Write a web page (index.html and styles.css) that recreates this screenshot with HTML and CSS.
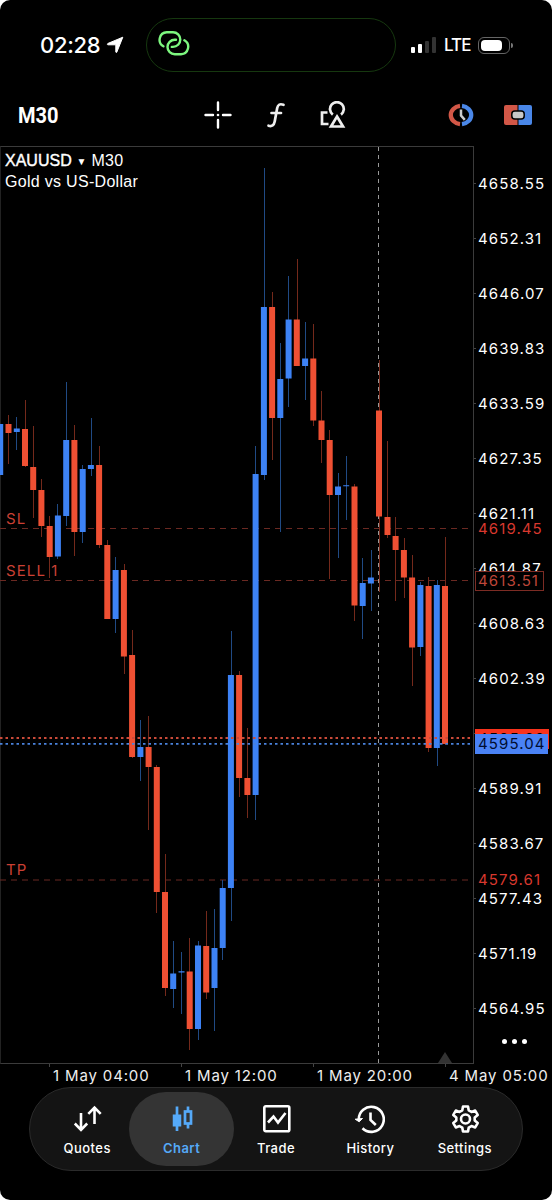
FILE: index.html
```
<!DOCTYPE html>
<html lang="en">
<head>
    <meta charset="UTF-8">
    <title>XAUUSD M30</title>
    <link rel="stylesheet" href="styles.css">
</head>
<body>
<div class="phone">
    <header class="status-bar">
        <div class="clock">
            <span>02:28</span>
            <svg width="18" height="18" viewBox="0 0 18 18"><path d="M16.800 1.200 10.800 16.200Q10.200 17 9.800 16V8.800H1.800Q.8 8.200 1.800 7.500Z" fill="#fff" stroke="#fff" stroke-linejoin="round"/></svg>
        </div>
        <div class="island">
            <svg width="32" height="26" viewBox="0 0 32 26" fill="none" stroke="#7df77f" stroke-width="2.400" stroke-linecap="round">
                <path d="M5.400 15.300A7.500 7.500 0 0 1 8.800 1.300H15A7.300 7.300 0 0 1 15 15.900H13.800"/>
                <path d="M26.400 9.300A7.500 7.500 0 0 1 23 23.300H16.800A7.300 7.300 0 0 1 16.800 8.700H18"/>
            </svg>
        </div>
        <div class="signal">
            <i class="bar b1"></i><i class="bar b2"></i><i class="bar b3 off"></i><i class="bar b4 off"></i>
        </div>
        <span class="network">LTE</span>
        <div class="battery"><i></i></div>
    </header>

    <nav class="toolbar">
        <span class="timeframe"><b>M30</b></span>
        <svg class="tool-cross" width="28" height="28" viewBox="0 0 28 28" stroke="#fff" stroke-width="2.400" stroke-linecap="round">
            <path d="M14 1.500V9M14 19V26.500M1.500 14H9M19 14H26.500"/>
            <path d="M14 14h.01" stroke-width="2.600"/>
        </svg>
        <svg class="tool-func" width="20" height="28" viewBox="0 0 20 28" fill="none" stroke="#eee" stroke-width="2.700" stroke-linecap="round">
            <path d="M17.500 3.800Q12.300 1.800 11.200 7L8.700 20.500Q7.600 26.300 2.500 24.700M5.500 12H15"/>
        </svg>
        <svg class="tool-shapes" width="28" height="28" viewBox="0 0 28 28" fill="none" stroke="#eee" stroke-width="2.700">
            <path d="M13.800 13.600A6.900 6.900 0 1 1 22 13.600"/>
            <path d="M8.500 11.500H3V23H9.500"/>
            <path d="M18 15.500 24 25.500H12Z"/>
        </svg>
        <svg class="tool-clock" width="28" height="24" viewBox="0 0 28 24" fill="none">
            <path d="M13 2.800A10.800 9.300 0 0 0 13 21.200" stroke="#d25747" stroke-width="4.300"/>
            <path d="M15 2.800A10.800 9.300 0 0 1 15 21.200" stroke="#4a87e8" stroke-width="4.300"/>
            <path d="M14 6.500V12.500L17.800 16.800" stroke="#ccc" stroke-width="2.500"/>
        </svg>
        <svg class="tool-trade" width="28" height="20" viewBox="0 0 28 20">
            <path d="M2 0H13.500V20H2Q0 20 0 18V2Q0 0 2 0Z" fill="#d25747"/>
            <path d="M14.500 0H26Q28 0 28 2V18Q28 20 26 20H14.500Z" fill="#4a87e8"/>
            <rect x="7.800" y="6" width="12.400" height="8" rx="3" fill="#c8c8c8" stroke="#000" stroke-width="1.500"/>
        </svg>
    </nav>

    <main class="chart">
        <section class="plot">
            <div class="symbol">
                <div><b>XAUUSD</b> <small>▼</small> M30</div>
                <div>Gold vs US-Dollar</div>
            </div>
            <svg class="candles" width="474" height="918" viewBox="0 146 474 918">
                <!-- order levels -->
                <g class="level">
                    <path d="M0 528.500H473M0 580.500H473M0 880H473"/>
                </g>
                <path class="day" d="M378.500 147V1063"/>
                <!-- wicks -->
                <path class="wick down" d="M8.500 415V464M25.500 400V467M33.500 426V518M41.500 479V537M49.500 516V578M74.500 425V556M99.500 446V548M107.500 540V619M124.500 564V674M132.500 630V758M148.500 716V830M156.500 765V913M165.500 854V996M189.500 938V1050M206.500 911V999M239.500 671V797M247.500 728V818M272.500 292V460M297.500 259V366M313.500 324V426M321.500 391V463M329.500 430V579M354.500 484V621M379.500 360V592M387.500 441V538M395.500 517V601M404.500 538V598M412.500 555V686M428.500 577V752M445.500 537V745"/>
                <path class="wick up" d="M16.500 417V450M57.500 504V559M66.500 382V526M82.500 465V543M91.500 418V476M115.500 557V633M140.500 720V781M173.500 941V1008M181.500 952V1014M198.500 941V1040M214.500 909V1031M222.500 880V960M231.500 631V921M255.500 446V820M264.500 168V480M280.500 343V532M288.500 276V407M305.500 322V400M338.500 473V558M346.500 456V520M362.500 558V639M371.500 550V611M420.500 582V656M437.500 580V766"/>
                <!-- bodies -->
                <path class="body down" d="M8.500 424V433M25 429V466M33.200 467V490M41.400 490V526M49.700 526V557M74.400 440V532M99.100 465V545M107.300 545V619M123.900 570V656.500M132.100 655V757M148.600 747V767M156.800 767V892M165 892V988M189.700 971.500V1029M206.200 946V992.500M239.100 675V778M247.400 778V795M272.100 307V418M296.800 319.500V366M313.300 358.500V420.500M321.500 420.500V440M329.700 440V495M354.500 486.500V605.500M379 410.500V516.500M387.500 517V535M395.600 536V550M403.900 550V577.500M412.100 577.500V647.500M428.600 586V748M445 586V744"/>
                <path class="body up" d="M.2 424V475M16.800 428.500V432M57.900 515.500V556.500M66.200 440V516M82.700 469V532M90.900 465V469M115.600 570V619M140.400 747V757M173.200 973.500V989M181.500 971.300V972.500M198 945.500V1029M214.500 948V988M222.700 888V948M230.900 675V888M255.600 474V795M263.900 307V475M280.300 379V418M288.600 319.500V378.500M305.100 358.500V366M338 486.500V495M346.200 485.300V486.300M362.700 583V606M370.900 577.500V583.500M420.400 585V647M436.800 585V748"/>
                <!-- ask / bid -->
                <path class="ask" d="M0 738H473"/>
                <path class="bid" d="M0 743.800H473"/>
                <path d="M445 1052 452 1063H438Z" fill="#333"/>
            </svg>
            <span class="order sl">SL</span>
            <span class="order sell">SELL 1</span>
            <span class="order tp">TP</span>
        </section>

        <aside class="prices">
            <span>4658.55</span>
            <span>4652.31</span>
            <span>4646.07</span>
            <span>4639.83</span>
            <span>4633.59</span>
            <span>4627.35</span>
            <span>4621.11</span>
            <span>4614.87</span>
            <span>4608.63</span>
            <span>4602.39</span>
            <span></span>
            <span>4589.91</span>
            <span>4583.67</span>
            <span>4577.43</span>
            <span>4571.19</span>
            <span>4564.95</span>
            <div class="tag tag-sl">4619.45</div>
            <div class="tag tag-sell">4613.51</div>
            <div class="tag tag-tp">4579.61</div>
            <div class="tag tag-ask">4595.60</div>
            <div class="tag tag-bid">4595.04</div>
            <div class="more"><i></i><i></i><i></i></div>
        </aside>
    </main>

    <div class="times">
        <span>1 May 04:00</span>
        <span>1 May 12:00</span>
        <span>1 May 20:00</span>
        <span>4 May 05:00</span>
    </div>

    <nav class="tabs">
        <a class="tab">
            <svg width="30" height="30" viewBox="0 0 30 30" fill="none" stroke="#fff" stroke-width="2.600">
                <path d="M9 9V25.500M2.800 19.500 9 25.800 15.200 19.500M22.500 20V3.500M16.300 9.800 22.500 3.500 28.700 9.800"/>
            </svg>
            <span>Quotes</span>
        </a>
        <a class="tab active">
            <svg width="30" height="30" viewBox="0 0 30 30" fill="none" stroke="#55a9f8" stroke-width="2.700">
                <path d="M10 2.500V27M21 2.500V7M21 20V24.500"/>
                <path d="M10 10.500V22.500" stroke-width="8.500"/>
                <rect x="18" y="7.500" width="6" height="12"/>
            </svg>
            <span>Chart</span>
        </a>
        <a class="tab">
            <svg width="30" height="30" viewBox="0 0 30 30" fill="none" stroke="#fff" stroke-width="2.600">
                <rect x="3.300" y="2.300" width="25" height="25" rx="1.500"/>
                <path d="M7 18.500 12.500 12.500 17 18.500 24.500 9"/>
            </svg>
            <span>Trade</span>
        </a>
        <a class="tab">
            <svg width="30" height="30" viewBox="0 0 30 30" fill="none" stroke="#fff" stroke-width="2.600">
                <path d="M3.800 16A12.500 12.500 0 1 1 7.500 24.200M15.500 8.500V16L20.800 21"/>
                <path d="M.2 15.200 4.200 17.800 7.500 14.500Z" fill="#fff" stroke-width="1"/>
            </svg>
            <span>History</span>
        </a>
        <a class="tab">
            <svg width="30" height="30" viewBox="0 0 30 30" fill="none" stroke="#fff" stroke-width="2.600" stroke-linejoin="round">
                <path d="M13 2.500H18L18.700 6.300 21.500 7.900 25.200 6.600 27.700 10.900 24.700 13.400V16.600L27.700 19.100 25.200 23.400 21.500 22.100 18.700 23.700 18 27.500H13L12.300 23.700 9.500 22.100 5.800 23.400 3.300 19.100 6.300 16.600V13.400L3.300 10.900 5.800 6.600 9.500 7.900 12.300 6.300Z"/>
                <circle cx="15.500" cy="15" r="4.500"/>
            </svg>
            <span>Settings</span>
        </a>
    </nav>
</div>
</body>
</html>
```
FILE: styles.css
```
* { box-sizing: border-box; }
body { margin: 0; background: #fff; font-family: Inter, sans-serif; color: #fff; }
svg { display: block; flex: none; }
.phone { width: 552px; height: 1200px; background: #000; border-radius: 10px; overflow: hidden; }

.status-bar { display: flex; align-items: center; height: 90px; padding-left: 40px; }
.clock { display: flex; align-items: center; gap: 6px; width: 106px; font-size: 22px; font-weight: 500; letter-spacing: -0.3px; white-space: nowrap; }
.island { width: 250px; height: 54px; margin-right: 15px; padding: 12px 0 0 11px; border: 1.5px solid #16380f; border-radius: 27px; }
.signal { display: flex; align-items: flex-end; gap: 3px; height: 16px; width: 25px; }
.bar { width: 4px; background: #fff; border-radius: 1px; }
.b1 { height: 6px; }
.b2 { height: 9px; }
.b3 { height: 12px; }
.b4 { height: 16px; }
.bar.off { background: #333; }
.network { width: 34px; margin-left: 8px; font-size: 17px; font-weight: 500; letter-spacing: -0.9px; }
.battery { position: relative; width: 32px; height: 17px; padding: 2px; border: 1.5px solid #666; border-radius: 6px; }
.battery i { display: block; width: 21px; height: 11px; background: #fff; border-radius: 4px; }
.battery::after { content: ""; position: absolute; right: -4px; top: 5px; width: 2px; height: 5px; background: #777; border-radius: 0 2px 2px 0; }

.toolbar { display: flex; align-items: center; height: 56px; padding: 0 20px 6px 18px; }
.timeframe { flex: none; width: 186px; font-family: Roboto, sans-serif; font-size: 22px; }
.timeframe b { display: inline-block; font-weight: 700; transform: scaleX(0.91); transform-origin: left; }
.tool-func { margin-left: 34px; }
.tool-shapes { margin-left: 33px; }
.tool-clock { margin-left: 100px; }
.tool-trade { margin-left: 29px; }

.chart { display: flex; height: 918px; }
.plot { position: relative; width: 474px; border: 1px solid #3b3b3b; border-left-color: #222; }
.candles { margin: -1px; }
.symbol { position: absolute; left: 4px; top: 3px; font: 16px/21px "Liberation Sans", sans-serif; letter-spacing: 0.3px; white-space: nowrap; }
.symbol div { height: 21px; }
.symbol b { font-weight: 400; letter-spacing: 0; -webkit-text-stroke: 0.4px #fff; }
.symbol small { font-size: 10px; line-height: 1; vertical-align: 1px; }
.level { stroke: #6b2922; stroke-width: 1; stroke-dasharray: 6 5; }
.day { stroke: #999; stroke-dasharray: 4 4; }
.wick { stroke-width: 1; }
.wick.down { stroke: #74291b; }
.wick.up { stroke: #204a84; }
.body { stroke-width: 6; }
.body.down { stroke: #ef5033; }
.body.up { stroke: #3d82f5; }
.ask, .bid { stroke-width: 1.8; stroke-dasharray: 2.5 3; }
.ask { stroke: #c94a39; }
.bid { stroke: #4a82dc; }
.order { position: absolute; left: 5px; font-size: 15px; line-height: 18px; letter-spacing: 1.1px; color: #cb4034; }
.sl { top: 363px; }
.sell { top: 415px; }
.tp { top: 714px; }

.prices { position: relative; width: 78px; padding-top: 10px; font-size: 15px; letter-spacing: 1.1px; }
.prices > span { display: block; height: 55px; padding-left: 4px; line-height: 55px; position: relative; }
.prices > span::before { content: ""; position: absolute; left: 0; top: 27px; width: 2px; height: 1px; background: #444; }
.tag { position: absolute; left: 1px; height: 20px; padding-left: 3px; line-height: 20px; color: #d8382e; }
.tag-sl { top: 373px; }
.tag-sell { top: 425px; width: 69px; padding-left: 2px; line-height: 18px; color: #bd4639; background: #000; border: 1px solid #7c2c24; }
.tag-tp { top: 724px; }
.tag-ask { top: 583px; width: 74px; background: #f8331c; color: #000; }
.tag-bid { top: 588px; width: 73px; background: #4a82f5; color: #000d30; }
.more { position: absolute; left: 28px; top: 893px; display: flex; gap: 5px; }
.more i { width: 5px; height: 5px; border-radius: 50%; background: #fff; }

.times { display: flex; height: 23px; padding-left: 49px; font-size: 15px; line-height: 23px; letter-spacing: 0.85px; white-space: nowrap; color: #eee; }
.times span { position: relative; width: 132px; padding-left: 4px; flex: none; }
.times span::before { content: ""; position: absolute; left: 0; top: 0; width: 1px; height: 3px; background: #444; }

.tabs { display: grid; grid-template-columns: repeat(5, 1fr); width: 494px; height: 84px; margin-left: 29px; padding: 0 10px; background: #141414; border: 1px solid #2b2b2b; border-radius: 42px; }
.tab { position: relative; display: flex; flex-direction: column; align-items: center; padding-top: 16px; font-size: 13px; font-weight: 500; letter-spacing: 0.45px; }
.tab span { margin-top: 6px; line-height: 16px; }
.tab svg, .tab span { position: relative; }
.tab.active { color: #55a9f8; }
.tab.active span { font-weight: 600; }
.tab.active::before { content: ""; position: absolute; top: 4px; bottom: 4px; left: -5px; right: -5px; background: #343434; border-radius: 37px; }
```
